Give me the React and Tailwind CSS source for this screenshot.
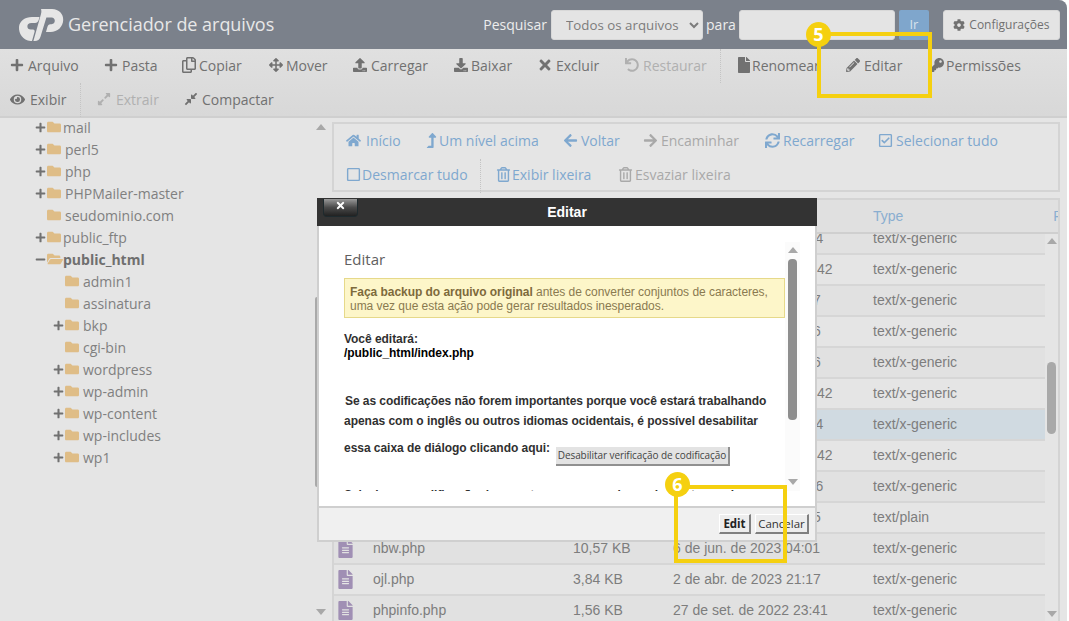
import React from "react";
import {
  FaPlus, FaRegCopy, FaArrowsAlt, FaUpload, FaDownload, FaTimes, FaUndo, FaFile, FaPencilAlt, FaKey,
  FaEye, FaExpandAlt, FaCompressAlt, FaHome, FaLevelUpAlt, FaArrowLeft, FaArrowRight, FaSync,
  FaRegCheckSquare, FaRegSquare, FaRegTrashAlt, FaCog, FaFolder, FaFolderOpen, FaFileAlt, FaMinus,
} from "react-icons/fa";

const Tool = ({ icon: I, label, w, off, size = 14, gap = "gap-[4px]" }) => (
  <div className={`flex items-center h-full shrink-0 whitespace-nowrap ${gap} ${w} ${off ? "text-[#b0b0b0]" : "text-[#717171]"}`}>
    <I size={size} className="shrink-0" />
    <span>{label}</span>
  </div>
);

const Nav = ({ icon: I, label, w, off, size = 15, gap = "gap-[3px]" }) => (
  <div className={`flex items-center h-full shrink-0 whitespace-nowrap ${gap} ${w} ${off ? "text-[#a9a9a9]" : "text-[#7fa8cf]"}`}>
    <I size={size} className="shrink-0" />
    <span>{label}</span>
  </div>
);

const Sep = ({ w }) => <div className={`h-[34px] border-l border-dotted border-[#c4c4c4] shrink-0 ${w}`} />;

const Tree = ({ name, indent, exp, open, bold, textPad }) => (
  <div className={`flex items-center h-[22px] ${indent}`}>
    <div className="w-[12px] shrink-0 flex items-center text-[#717171]">
      {exp === "+" && <FaPlus size={11} />}
      {exp === "-" && <FaMinus size={11} />}
    </div>
    {open ? (
      <FaFolderOpen size={16} className="text-[#dfbd87] shrink-0" />
    ) : (
      <FaFolder size={14} className="text-[#dfbd87] shrink-0" />
    )}
    <span className={`${textPad} ${bold ? "font-bold text-[#6f6f6f]" : "text-[#808080]"}`}>{name}</span>
  </div>
);

const rows = [
  { date: "27 de jul. de 2023 21:14" },
  { date: "27 de mar. de 2022 23:42" },
  { date: "1 de abr. de 2023 21:17" },
  { date: "2 de abr. de 2023 21:16" },
  { date: "2 de abr. de 2023 21:16" },
  { date: "27 de mar. de 2022 23:42" },
  { date: "27 de jul. de 2023 21:14", sel: true },
  { date: "27 de mar. de 2022 23:42" },
  { date: "27 de jul. de 2023 21:16" },
  { date: "2 de abr. de 2023 21:15", type: "text/plain" },
  { name: "nbw.php", size: "10,57 KB", date: "6 de jun. de 2023 04:01" },
  { name: "ojl.php", size: "3,84 KB", date: "2 de abr. de 2023 21:17" },
  { name: "phpinfo.php", size: "1,56 KB", date: "27 de set. de 2022 23:41" },
];

const Logo = () => (
  <svg viewBox="0 0 46 32" className="w-[46px] h-[32px] shrink-0" fill="#e6e6e6">
    <path d="M14 8 H21.5 L21 10 C20.3 12.5 19 14 17 14 H13.5 C10.5 14 9.4 15.6 9.4 17.4 C9.4 19.2 10.6 20.4 12.8 20.4 H15 C16.3 20.4 16.9 21.6 16.6 22.7 L14 32 H12.5 C5 31 0.6 25 1 18 C1.5 12 7 8 14 8 Z" />
    <path d="M23 0 H34 C41 0 45.5 5 45.2 11 C45 18 39.5 23 32.5 23 H28 L29.4 18 C29.8 16.6 30.8 15.2 32.4 15.2 H33.5 C35.6 15.2 36.8 13.6 36.8 11.8 C36.8 10 35.6 8.6 33.6 8.6 H28.4 L22.4 28 C21.6 30.6 19.6 32 17 32 H15.4 L23 5 C23.6 3 23.4 1.2 23 0 Z" />
  </svg>
);

const Callout = ({ n, box, badge }) => (
  <>
    <div className={`absolute border-[4px] border-[#f5d010] ${box}`} />
    <div className={`absolute w-[25px] h-[25px] rounded-full bg-[#f5d010] text-white font-bold text-[18px] leading-[25px] text-center ${badge}`}>{n}</div>
  </>
);

const Tri = ({ down }) => (
  <div className={`w-0 h-0 border-x-[5px] border-x-transparent ${down ? "border-t-[6px] border-t-[#a8a8a8]" : "border-b-[6px] border-b-[#a8a8a8]"}`} />
);

export default function App() {
  return (
    <div className="relative w-[1069px] h-[621px] overflow-hidden bg-white font-['Open_Sans',sans-serif] text-[14px]">
      <div className="w-[1067px] h-[621px] flex flex-col bg-[#e5e5e5] rounded-tr-lg overflow-hidden">
        {/* header */}
        <header className="h-[49px] shrink-0 bg-[#7b818b] flex items-center">
          <div className="ml-[18px]"><Logo /></div>
          <span className="ml-[4px] text-[18px] text-[#e8e8e8] tracking-[-0.03px]">Gerenciador de arquivos</span>
          <span className="ml-[209px] text-[#ededed]">Pesquisar</span>
          <select className="ml-[4px] w-[152px] h-[30px] bg-[#e4e4e4] rounded-[3px] text-[13.3px] text-[#7c7c7c] pl-[10px] border border-[#d8d8d8]">
            <option>Todos os arquivos</option>
          </select>
          <span className="ml-[3px] text-[#ededed]">para</span>
          <div className="ml-[3px] w-[156px] h-[30px] bg-[#e4e4e4] rounded-[3px] border border-[#d8d8d8]" />
          <div className="ml-[4px] w-[30px] h-[30px] bg-[#7fa6cc] rounded-[2px] text-[#d8e2ec] text-[13px] flex items-center justify-center">Ir</div>
          <div className="ml-[14px] w-[117px] h-[30px] bg-[#e4e4e4] rounded-[3px] border border-[#d8d8d8] text-[12px] text-[#717171] flex items-center justify-center gap-[4px]">
            <FaCog size={12} /><span>Configurações</span>
          </div>
        </header>

        {/* toolbar */}
        <div className="h-[69px] shrink-0 border-b-2 border-[#cfcfcf] bg-gradient-to-b from-[#e0e0e0] to-[#d8d8d8] pl-[10px]">
          <div className="flex h-[34px] pb-[2px]">
            <Tool icon={FaPlus} label="Arquivo" w="w-[94px]" />
            <Tool icon={FaPlus} label="Pasta" w="w-[77px]" />
            <Tool icon={FaRegCopy} label="Copiar" size={16} gap="gap-[2px]" w="w-[88px]" />
            <Tool icon={FaArrowsAlt} label="Mover" gap="gap-[3px]" w="w-[84px]" />
            <Tool icon={FaUpload} label="Carregar" w="w-[101px]" />
            <Tool icon={FaDownload} label="Baixar" gap="gap-[3px]" w="w-[83px]" />
            <Tool icon={FaTimes} label="Excluir" size={16} gap="gap-[3px]" w="w-[88px]" />
            <Tool icon={FaUndo} label="Restaurar" w="w-[95px]" off />
            <Sep w="w-[16px]" />
            <Tool icon={FaFile} label="Renomear" size={16} gap="gap-0" w="w-[110px]" />
            <Tool icon={FaPencilAlt} label="Editar" w="w-[84px]" />
            <Tool icon={FaKey} label="Permissões" gap="gap-[2px]" w="w-[110px]" />
          </div>
          <div className="flex h-[34px] pb-[2px]">
            <Tool icon={FaEye} label="Exibir" size={15} gap="gap-[5px]" w="w-[70px]" />
            <Sep w="w-[17px]" />
            <Tool icon={FaExpandAlt} label="Extrair" gap="gap-[5px]" w="w-[87px]" off />
            <Tool icon={FaCompressAlt} label="Compactar" w="w-[110px]" />
          </div>
        </div>

        {/* main */}
        <div className="flex-1 flex min-h-0">
          {/* sidebar */}
          <aside className="w-[332px] shrink-0 flex">
            <div className="w-[313px] pl-[35px] -mt-[2px]">
              <Tree name="mail" exp="+" textPad="ml-[2px]" />
              <Tree name="perl5" exp="+" textPad="ml-[4px]" />
              <Tree name="php" exp="+" textPad="ml-[4px]" />
              <Tree name="PHPMailer-master" exp="+" textPad="ml-[4px]" />
              <Tree name="seudominio.com" textPad="ml-[4px]" />
              <Tree name="public_ftp" exp="+" textPad="ml-[2px]" />
              <Tree name="public_html" exp="-" open bold textPad="ml-[0px]" />
              <Tree name="admin1" indent="ml-[18px]" textPad="ml-[4px]" />
              <Tree name="assinatura" indent="ml-[18px]" textPad="ml-[4px]" />
              <Tree name="bkp" exp="+" indent="ml-[18px]" textPad="ml-[4px]" />
              <Tree name="cgi-bin" indent="ml-[18px]" textPad="ml-[4px]" />
              <Tree name="wordpress" exp="+" indent="ml-[18px]" textPad="ml-[4px]" />
              <Tree name="wp-admin" exp="+" indent="ml-[18px]" textPad="ml-[4px]" />
              <Tree name="wp-content" exp="+" indent="ml-[18px]" textPad="ml-[4px]" />
              <Tree name="wp-includes" exp="+" indent="ml-[18px]" textPad="ml-[4px]" />
              <Tree name="wp1" exp="+" indent="ml-[18px]" textPad="ml-[4px]" />
            </div>
            <div className="w-[15px] flex flex-col items-center justify-between py-[6px]">
              <Tri />
              <Tri down />
            </div>
          </aside>

          {/* content */}
          <div className="w-[728px] shrink-0 flex flex-col pt-[4px]">
            <div className="h-[70px] shrink-0 border-2 border-[#d4d4d4] pl-[12px]">
              <div className="flex h-[33px]">
                <Nav icon={FaHome} label="Início" gap="gap-[5px]" w="w-[78px]" />
                <Nav icon={FaLevelUpAlt} label="Um nível acima" gap="gap-0" w="w-[139px]" />
                <Nav icon={FaArrowLeft} label="Voltar" w="w-[80px]" />
                <Nav icon={FaArrowRight} label="Encaminhar" w="w-[122px]" off />
                <Nav icon={FaSync} label="Recarregar" w="w-[113px]" />
                <Nav icon={FaRegCheckSquare} label="Selecionar tudo" w="w-[120px]" />
              </div>
              <div className="flex h-[33px] pt-[2px]">
                <Nav icon={FaRegSquare} label="Desmarcar tudo" gap="gap-[1px]" w="w-[134px]" />
                <Sep w="w-[16px]" />
                <Nav icon={FaRegTrashAlt} label="Exibir lixeira" gap="gap-[1px]" w="w-[122px]" />
                <Nav icon={FaRegTrashAlt} label="Esvaziar lixeira" gap="gap-[2px]" w="w-[130px]" off />
              </div>
            </div>

            <div className="mt-[6px] flex-1 min-h-0 flex flex-col border-x-2 border-t-2 border-[#d4d4d4] font-['Liberation_Sans',sans-serif]">
              <div className="h-[34px] shrink-0 bg-[#e0e0e0] border-b-2 border-[#cfcfcf] flex items-center text-[#8aaed0] overflow-hidden">
                <span className="ml-[539px]">Type</span>
                <span className="ml-[150px]">Permissões</span>
              </div>
              <div className="flex-1 min-h-0 flex overflow-hidden">
                <div className="w-[711px] shrink-0 -mt-[10px]">
                  {rows.map((r, i) => (
                    <div
                      key={i}
                      className={`h-[31px] flex items-center border-b-2 border-[#d6d6d6] text-[#7d7d7d] ${r.sel ? "bg-[#d0dae1]" : i % 2 ? "bg-[#e5e5e5]" : "bg-[#e1e1e1]"}`}
                    >
                      <div className="w-[39px] shrink-0 pl-[2px]">
                        {r.name && <FaFileAlt size={19} className="text-[#a08fb4]" />}
                      </div>
                      <div className="w-[200px] shrink-0">{r.name}</div>
                      <div className="w-[100px] shrink-0">{r.size}</div>
                      <div className="w-[200px] shrink-0 whitespace-nowrap">{r.date}</div>
                      <div>{r.type || "text/x-generic"}</div>
                    </div>
                  ))}
                </div>
                <div className="w-[15px] flex flex-col items-center py-[4px] justify-between">
                  <Tri />
                  <div className="absolute top-[362px] w-[9px] h-[72px] rounded-[5px] bg-[#a9a9a9]" />
                  <Tri down />
                </div>
              </div>
            </div>
          </div>
        </div>
      </div>

      {/* sidebar scrollbar thumb */}
      <div className="absolute left-[315px] top-[297px] w-[3px] h-[190px] rounded-l-[2px] bg-[#a9a9a9]" />

      {/* modal */}
      <div className="absolute left-[317px] top-[198px] w-[500px] h-[344px] flex flex-col bg-white font-['Liberation_Sans',sans-serif]">
        <div className="relative h-[28px] shrink-0 bg-[#333333] flex items-center justify-center text-white font-bold text-[14px]">
          <div className="absolute left-[6px] top-[1px] w-[35px] h-[18px] rounded-b-[4px] bg-gradient-to-b from-[#9a9a9a] via-[#4a4a4a] to-[#222222] flex items-center justify-center border-x border-b border-[#1e2a2e]">
            <FaTimes size={11} className="text-white -mt-[5px]" />
          </div>
          Editar
        </div>
        <div className="flex-1 min-h-0 flex border-x-2 border-[#cfcfcf]">
          <div className="w-[466px] shrink-0 overflow-hidden h-[249px] mt-[16px] pl-[25px] text-[12px] text-[#303030] tracking-[-0.04px]">
            <div className="font-['Open_Sans',sans-serif] text-[15px] text-[#606060] leading-[20px] mt-[7px] tracking-normal">Editar</div>
            <div className="mt-[9px] w-[441px] h-[40px] border border-[#e6d98a] bg-[#fdf6c9] px-[5px] py-[6px] leading-[14px] text-[#8a7a50]">
              <b className="text-[#7d6a3c]">Faça backup do arquivo original</b> antes de converter conjuntos de caracteres, uma vez que esta ação pode gerar resultados inesperados.
            </div>
            <div className="mt-[14px] font-bold leading-[14px]">Você editará:<br /><span className="text-black">/public_html/index.php</span></div>
            <div className="mt-[32px] ml-px font-bold leading-[19px] whitespace-nowrap tracking-[-0.07px]">Se as codificações não forem importantes porque você estará trabalhando</div>
            <div className="font-bold leading-[19px] pt-[1px] whitespace-nowrap tracking-[-0.03px]">apenas com o inglês ou outros idiomas ocidentais, é possível desabilitar</div>
            <div className="mt-[8px] font-bold flex items-start h-[30px] leading-[19px]">
              <span>essa caixa de diálogo clicando aqui:</span>
              <div className="ml-[6px] mt-[8px] w-[174px] h-[19px] bg-[#e3e3e3] border-r-2 border-b-2 border-[#909090] text-[10px] font-normal flex items-center justify-center whitespace-nowrap text-[#444] font-['Open_Sans',sans-serif] tracking-[-0.08px]">Desabilitar verificação de codificação</div>
            </div>
            <div className="mt-[19px] font-bold leading-[14px] whitespace-nowrap">Selecione a codificação de caracteres a ser usada ao abrir este arquivo.</div>
          </div>
          <div className="w-[15px] shrink-0 mt-[16px] h-[249px] bg-[#fbfbfb] flex flex-col items-center pt-[5px]">
            <Tri />
            <div className="mt-[6px] w-[9px] h-[161px] rounded-[4px] bg-[#8e8e8e]" />
            <div className="mt-[59px]"><Tri down /></div>
          </div>
        </div>
        <div className="h-[36px] shrink-0 bg-[#f0f0f0] border-2 border-[#cfcfcf] flex items-start justify-end pt-[6px] pr-[6px] gap-[4px] text-[11.5px] font-['Open_Sans',sans-serif]">
          <div className="h-[20px] w-[32px] bg-[#ededed] border-l border-t border-white border-r-2 border-b-2 border-r-[#808080] border-b-[#808080] font-bold text-[#222] flex items-center justify-center">Edit</div>
          <div className="h-[20px] w-[54px] bg-[#ededed] border-l border-t border-white border-r-2 border-b-2 border-r-[#808080] border-b-[#808080] text-[#333] flex items-center justify-center">Cancelar</div>
        </div>
      </div>

      <Callout n="5" box="left-[817px] top-[32px] w-[115px] h-[66px]" badge="left-[806px] top-[22px]" />
      <Callout n="6" box="left-[674px] top-[485px] w-[113px] h-[78px]" badge="left-[665px] top-[472px]" />
    </div>
  );
}
